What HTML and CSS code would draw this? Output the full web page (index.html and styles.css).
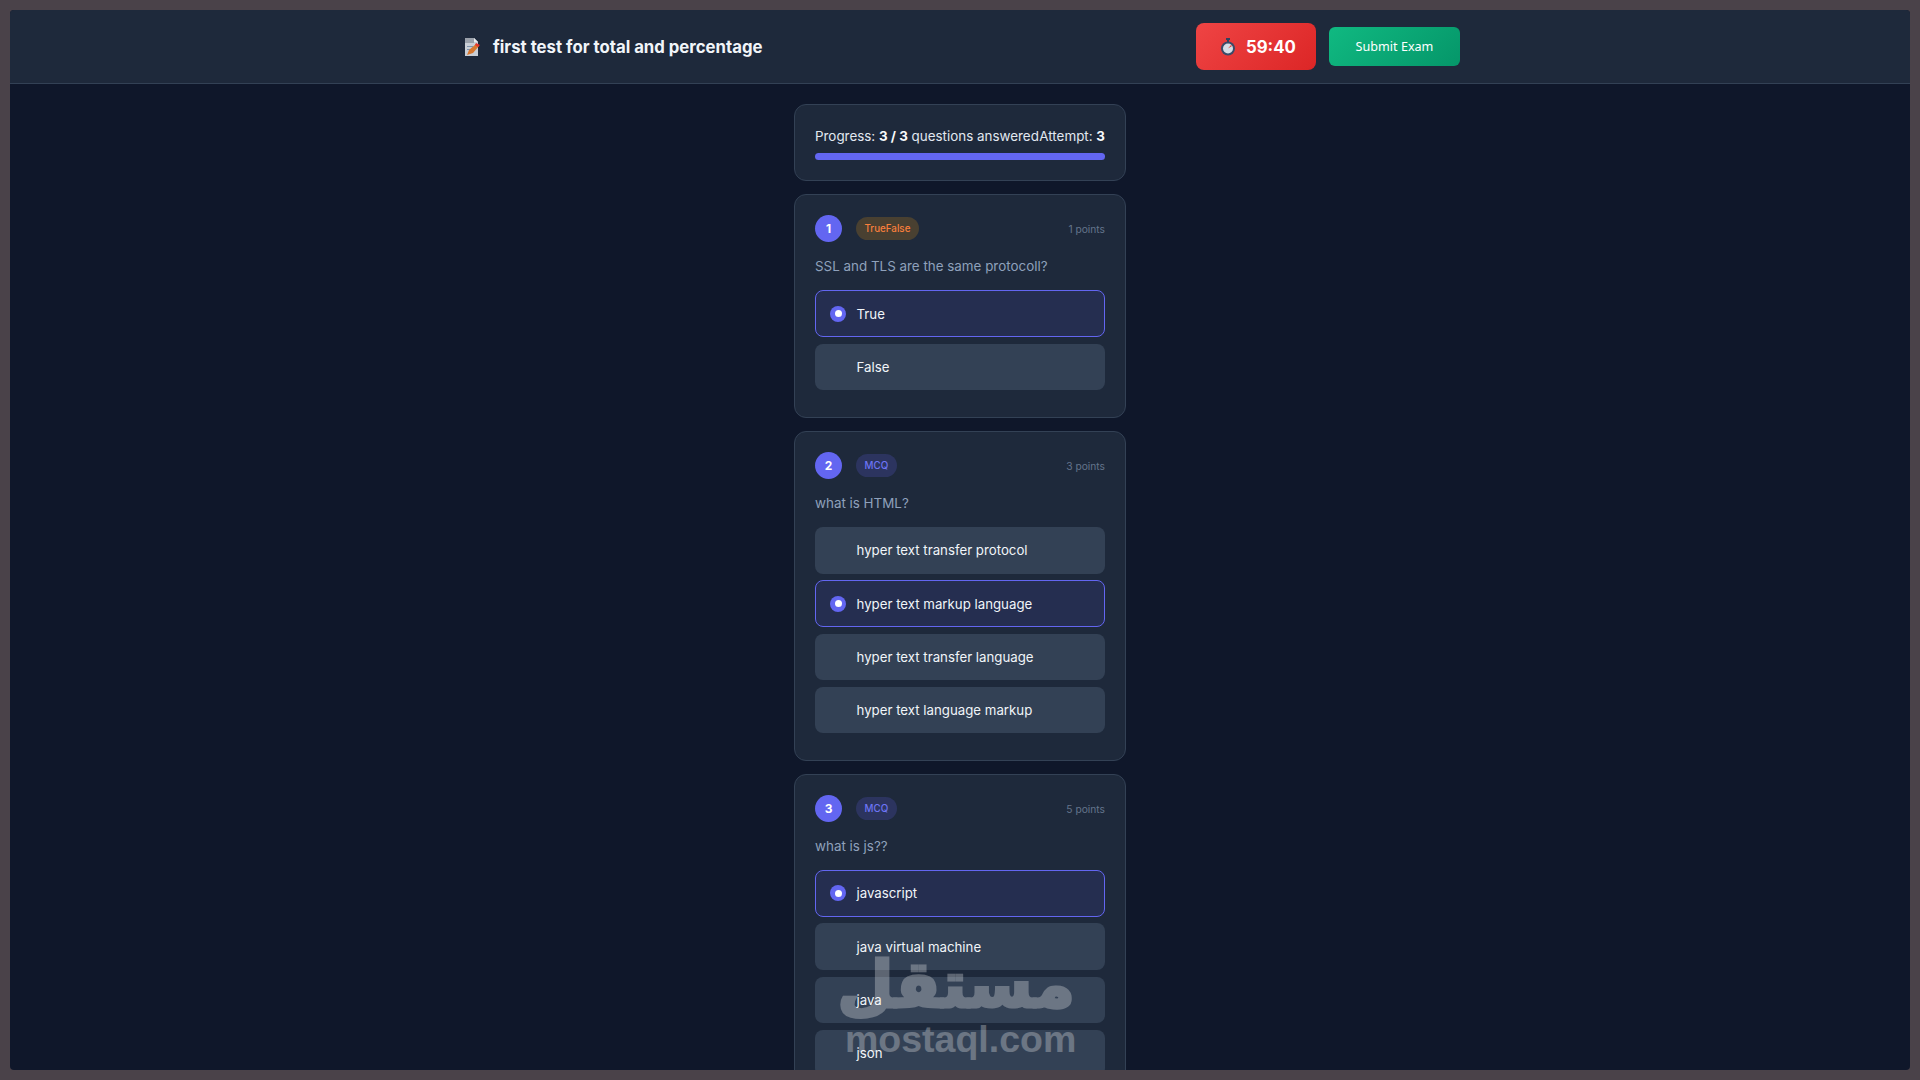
FILE: index.html
```html
<!DOCTYPE html>
<html>
<head>
	<meta charset="utf-8">
	<title>first test for total and percentage</title>
	<link rel="stylesheet" href="styles.css">
</head>
<body>
	<div class="frame">
		<div class="screen">
			<header class="exam-header">
				<div class="exam-header-inner">
					<h1 class="exam-title">
						<svg class="title-icon" viewBox="0 0 16 18" width="16" height="18">
							<path d="M1 0h9l4 4v14H1z" fill="#c9ced6"/>
							<path d="M1 0h9v5H1z" fill="#9aa0aa"/>
							<path d="M10 0l4 4h-4z" fill="#e8ebef"/>
							<path d="M3 8h6v1H3zM3 11h4v1H3z" fill="#7d93ad"/>
							<path d="M3 17l2-5 7-6 3 2-6 7z" fill="#d8782f"/>
							<path d="M12 5l4 2-2 2-3-2z" fill="#e5352b"/>
						</svg>
						<span>first test for total and percentage</span>
					</h1>
					<div class="exam-actions">
						<div class="timer">
							<svg class="timer-icon" viewBox="0 0 16 18" width="16" height="18">
								<path d="M6 0h4v2H9v2H7V2H6z" fill="#33415c"/>
								<circle cx="8" cy="10.500" r="7" fill="#3b4a68"/>
								<circle cx="8" cy="10.500" r="5" fill="#d7dde6"/>
								<path d="M8 10.500l3-3.500 1 1z" fill="#e5352b"/>
							</svg>
							<span>59:40</span>
						</div>
						<button class="submit-btn">Submit Exam</button>
					</div>
				</div>
			</header>

			<main class="exam-body">
				<section class="card progress-card">
					<div class="progress-text">
						<span>Progress: <b>3 / 3</b> questions answered</span>
						<span>Attempt: <b>3</b></span>
					</div>
					<div class="progress-bar"></div>
				</section>

				<section class="card">
					<div class="q-head">
						<span class="q-num">1</span>
						<span class="badge badge-tf">TrueFalse</span>
						<span class="q-points">1 points</span>
					</div>
					<p class="q-text">SSL and TLS are the same protocoll?</p>
					<div class="option selected"><i class="radio"></i>True</div>
					<div class="option"><i class="radio"></i>False</div>
				</section>

				<section class="card">
					<div class="q-head">
						<span class="q-num">2</span>
						<span class="badge badge-mcq">MCQ</span>
						<span class="q-points">3 points</span>
					</div>
					<p class="q-text">what is HTML?</p>
					<div class="option"><i class="radio"></i>hyper text transfer protocol</div>
					<div class="option selected"><i class="radio"></i>hyper text markup language</div>
					<div class="option"><i class="radio"></i>hyper text transfer language</div>
					<div class="option"><i class="radio"></i>hyper text language markup</div>
				</section>

				<section class="card">
					<div class="q-head">
						<span class="q-num">3</span>
						<span class="badge badge-mcq">MCQ</span>
						<span class="q-points">5 points</span>
					</div>
					<p class="q-text">what is js??</p>
					<div class="option selected"><i class="radio"></i>javascript</div>
					<div class="option"><i class="radio"></i>java virtual machine</div>
					<div class="option"><i class="radio"></i>java</div>
					<div class="option"><i class="radio"></i>json</div>
				</section>
			</main>

			<div class="watermark">
				<div class="wm-arabic" lang="ar" dir="rtl">مستقل</div>
				<div class="wm-latin">mostaql.com</div>
			</div>
		</div>
	</div>
</body>
</html>
```

FILE: styles.css
```css
*{
	box-sizing: border-box;
}
html, body{
	margin: 0;
	height: 100%;
	overflow: hidden;
}
body{
	background: #4a4249;
	font-family: "Inter", "Liberation Sans", sans-serif;
}
.frame{
	height: 1080px;
	padding: 10px;
}
.screen{
	position: relative;
	height: 1060px;
	overflow: hidden;
	border-radius: 4px;
	background: #0f172a;
}

.exam-header{
	height: 74px;
	background: #1e293b;
	border-bottom: 1px solid #334155;
}
.exam-header-inner{
	width: 1000px;
	height: 100%;
	margin: 0 auto;
	display: flex;
	align-items: center;
	justify-content: space-between;
}
.exam-title{
	margin: 0;
	padding-left: 4px;
	display: flex;
	align-items: center;
	gap: 13px;
	font-size: 16.750px;
	font-weight: 700;
	color: #f1f5f9;
}
.exam-actions{
	display: flex;
	align-items: center;
	gap: 13px;
}
.timer{
	width: 120px;
	height: 47px;
	border-radius: 8px;
	padding-left: 24px;
	display: flex;
	align-items: center;
	gap: 10px;
	background: linear-gradient(135deg, #ef4444, #dc2626);
	color: #fff;
	font-size: 16.800px;
	font-weight: 700;
}
.submit-btn{
	width: 131px;
	height: 39px;
	border: 0;
	border-radius: 6px;
	background: linear-gradient(135deg, #10b981, #059669);
	color: #fff;
	font-family: "Noto Sans", sans-serif;
	font-size: 12.600px;
}

.exam-body{
	width: 332px;
	margin: 0 auto;
	padding-top: 20px;
}
.card{
	margin-bottom: 13.400px;
	padding: 20px;
	background: #1e293b;
	border: 1px solid #334155;
	border-radius: 12px;
}
.progress-card{
	height: 77px;
}
.progress-text{
	display: flex;
	justify-content: space-between;
	height: 21px;
	font-size: 13.400px;
	line-height: 23px;
	white-space: nowrap;
	color: #e2e8f0;
}
.progress-text b{
	font-weight: 700;
	color: #f8fafc;
}
.progress-bar{
	height: 7px;
	margin-top: 7px;
	border-radius: 4px;
	background: #6366f1;
}

.q-head{
	display: flex;
	align-items: center;
	height: 27px;
}
.q-num{
	width: 27px;
	height: 27px;
	border-radius: 50%;
	background: #6366f1;
	color: #fff;
	font-size: 12px;
	font-weight: 700;
	line-height: 27px;
	text-align: center;
}
.badge{
	margin-left: 14px;
	padding: 0 8.500px;
	height: 23px;
	border-radius: 12px;
	font-size: 9.800px;
	font-weight: 500;
	line-height: 24px;
}
.badge-tf{
	background: rgba(245, 158, 11, 0.2);
	color: #f97f3c;
}
.badge-mcq{
	background: rgba(99, 102, 241, 0.2);
	color: #6d74f5;
}
.q-points{
	margin-left: auto;
	font-size: 10.240px;
	color: #64748b;
}
.q-text{
	margin: 13px 0 14px;
	height: 21px;
	font-size: 13.400px;
	line-height: 23px;
	color: #8fa1bb;
}
.option{
	display: flex;
	align-items: center;
	gap: 10.500px;
	height: 46.400px;
	margin-bottom: 6.800px;
	padding-left: 14px;
	background: #334155;
	border: 1px solid transparent;
	border-radius: 8px;
	font-size: 13.250px;
	font-weight: 400;
	color: #f1f5f9;
}
.radio{
	position: relative;
	width: 16px;
	height: 16px;
	border-radius: 50%;
}
.option.selected{
	background: #252e50;
	border-color: #6366f1;
}
.selected .radio{
	background: #6366f1;
}
.selected .radio::after{
	content: "";
	position: absolute;
	top: 4.500px;
	left: 4.500px;
	width: 7px;
	height: 7px;
	border-radius: 50%;
	background: #fff;
}

.watermark{
	position: absolute;
	left: 835px;
	top: 929px;
	width: 230px;
	color: #fff;
	opacity: 0.28;
	text-align: center;
	font-weight: 700;
	pointer-events: none;
}
.wm-arabic{
	height: 80px;
	font-family: "DejaVu Sans", sans-serif;
	font-size: 65px;
	line-height: 92px;
	white-space: nowrap;
	-webkit-text-stroke: 3px #fff;
}
.wm-latin{
	font-family: "Liberation Sans", sans-serif;
	font-size: 37.500px;
	line-height: 40px;
}
```
